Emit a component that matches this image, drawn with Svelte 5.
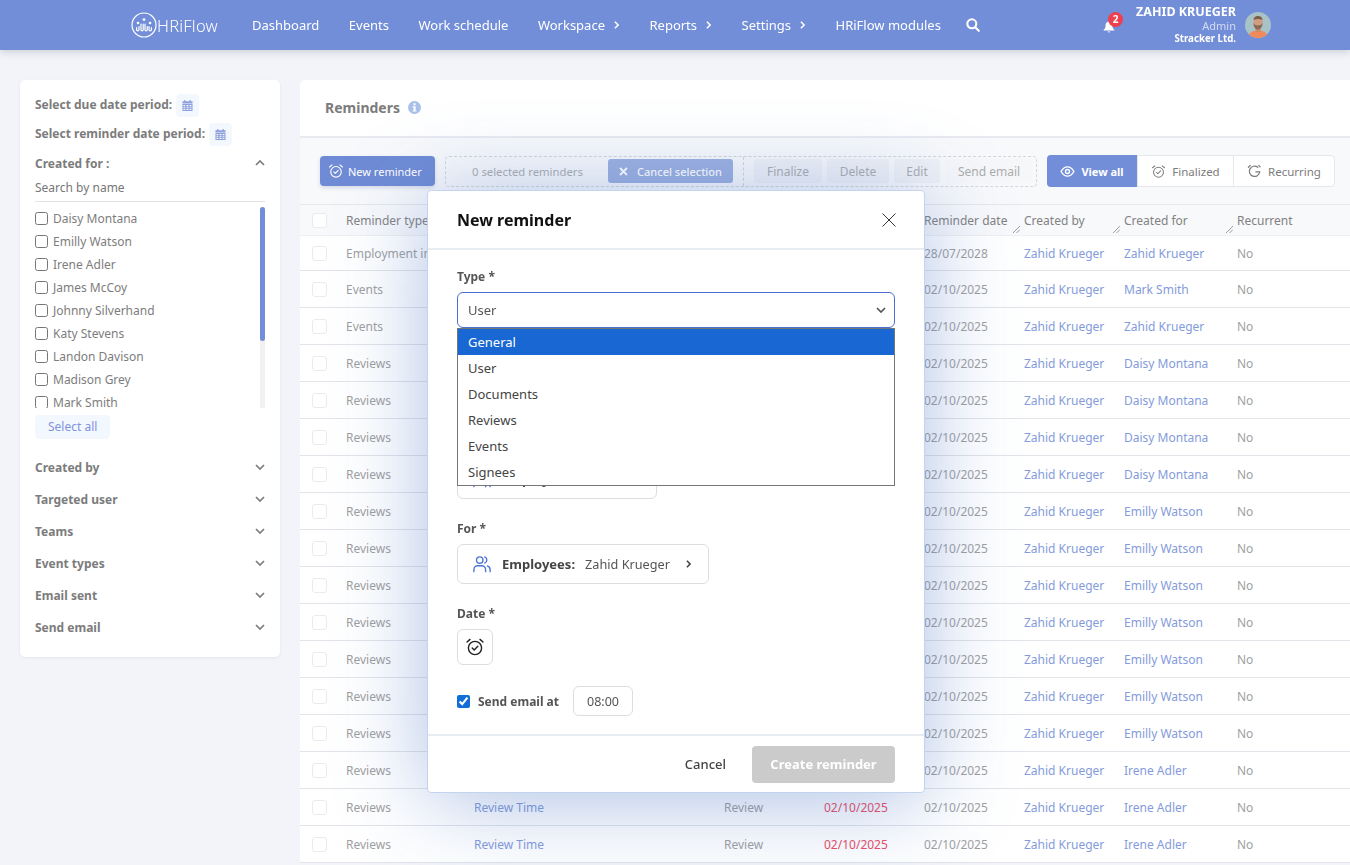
<script lang="ts">
  const navItems = [
    { label: 'Dashboard' },
    { label: 'Events' },
    { label: 'Work schedule' },
    { label: 'Workspace', more: true },
    { label: 'Reports', more: true },
    { label: 'Settings', more: true },
    { label: 'HRiFlow modules' }
  ];

  const people = [
    'Daisy Montana',
    'Emilly Watson',
    'Irene Adler',
    'James McCoy',
    'Johnny Silverhand',
    'Katy Stevens',
    'Landon Davison',
    'Madison Grey',
    'Mark Smith',
    'Zahid Krueger'
  ];

  const filters = ['Created by', 'Targeted user', 'Teams', 'Event types', 'Email sent', 'Send email'];

  const columns = [
    { label: 'Reminder type' },
    { label: 'Title' },
    { label: 'Category' },
    { label: 'Due date' },
    { label: 'Reminder date', grip: true },
    { label: 'Created by', grip: true },
    { label: 'Created for', grip: true },
    { label: 'Recurrent' }
  ];

  const createdFor = [
    'Zahid Krueger', 'Mark Smith', 'Zahid Krueger',
    'Daisy Montana', 'Daisy Montana', 'Daisy Montana', 'Daisy Montana',
    'Emilly Watson', 'Emilly Watson', 'Emilly Watson', 'Emilly Watson',
    'Emilly Watson', 'Emilly Watson', 'Emilly Watson',
    'Irene Adler', 'Irene Adler', 'Irene Adler'
  ];

  const rows = createdFor.map((person, i) => ({
    type: i === 0 ? 'Employment info' : i < 3 ? 'Events' : 'Reviews',
    title: i === 0 ? 'Contract end' : i < 3 ? 'Event' : 'Review Time',
    category: i === 0 ? 'Employment' : i < 3 ? 'Event' : 'Review',
    due: i === 0 ? '28/07/2028' : '02/10/2025',
    reminder: i === 0 ? '28/07/2028' : '02/10/2025',
    person
  }));

  const typeOptions = ['General', 'User', 'Documents', 'Reviews', 'Events', 'Signees'];
</script>

{#snippet chevron(dir)}
  <svg class="chev {dir}" viewBox="0 0 10 6" width="10" height="6" fill="none" stroke="currentColor" stroke-width="1.7">
    <path d="M1 1l4 4 4-4" />
  </svg>
{/snippet}

{#snippet calendar()}
  <span class="cal-btn">
    <svg viewBox="0 0 12 12" width="11" height="11" fill="#8ea0dc">
      <rect x="2.4" y="0" width="1.4" height="2.4" />
      <rect x="8.2" y="0" width="1.4" height="2.4" />
      <path d="M.5 1.4h11v2.4H.5z" />
      <path d="M.5 4.4h11V12H.5zM1.6 5.4v1.4h2V5.4zm3.3 0v1.4h2.2V5.4zm3.4 0v1.4h2V5.4zM1.6 7.8v1.2h2V7.8zm3.3 0v1.2h2.2V7.8zm3.4 0v1.2h2V7.8zm-6.7 2.1V11h2V9.9zm3.3 0V11h2.2V9.9zm3.4 0V11h2V9.9z" fill-rule="evenodd" />
    </svg>
  </span>
{/snippet}

{#snippet alarm(size)}
  <svg viewBox="0 0 20 20" width={size} height={size} fill="none" stroke="currentColor" stroke-width="1.4" stroke-linecap="round" stroke-linejoin="round">
    <circle cx="10" cy="11" r="6.6" />
    <path d="M2 5l3-2.6M18 5l-3-2.6" />
    <path d="M7.2 11l2 2 3.6-3.8" />
  </svg>
{/snippet}

{#snippet users(size)}
  <svg viewBox="0 0 20 20" width={size} height={size} fill="none" stroke="#4a74d2" stroke-width="1.5" stroke-linecap="round">
    <circle cx="7.5" cy="5.6" r="3.6" />
    <path d="M1 18.5v-2.2c0-2.6 2-4.4 4.4-4.4h4.2c2.4 0 4.4 1.8 4.4 4.4v2.2" />
    <path d="M13 2.2a3.6 3.6 0 0 1 0 6.8" />
    <path d="M16 12.2c1.8.6 3 2.1 3 4.1v2.2" />
  </svg>
{/snippet}

<header class="topbar">
  <div class="logo">
    <svg viewBox="0 0 26 26" width="26" height="26" fill="none" stroke="#fff" stroke-width="1.2" stroke-linecap="round">
      <circle cx="13" cy="13" r="12" />
      <path d="M5.6 15.5v2.2c0 1.6 2.4 1.6 2.4 0v-3M10 12v5.7c0 1.6 2.2 1.6 2.2 0V12M14 12v5.7c0 1.6 2.2 1.6 2.2 0v-3M18 14.5v3.2c0 1.6 2.4 1.6 2.4 0v-2.2" />
      <circle cx="7" cy="11" r="1.3" fill="#fff" stroke="none" />
      <circle cx="13" cy="7.6" r="1.4" fill="#fff" stroke="none" />
      <circle cx="19" cy="11" r="1.3" fill="#fff" stroke="none" />
    </svg>
    <span>HRiFlow</span>
  </div>
  <nav class="menu">
    {#each navItems as item}
      <span class="menu-item">
        {item.label}
        {#if item.more}
          <svg viewBox="0 0 6 10" width="5" height="8" fill="none" stroke="currentColor" stroke-width="1.9"><path d="M1 1l4 4-4 4" /></svg>
        {/if}
      </span>
    {/each}
    <svg class="search" viewBox="0 0 14 14" width="14" height="14" fill="none" stroke="#fff" stroke-width="2.1" stroke-linecap="round">
      <circle cx="5.8" cy="5.8" r="4.5" />
      <path d="M9.4 9.4l3.4 3.4" />
    </svg>
  </nav>
  <div class="account">
    <span class="bell">
      <svg viewBox="0 0 14 15" width="12" height="13" fill="#fff">
        <path d="M7 0.8c-.5 0-.9.4-.9.9v.4C4 2.6 3 4.2 3 6.2c0 3-1 3.9-2.2 5.2-.3.3 0 .9.4.9h11.6c.4 0 .7-.6.4-.9C12 10.100 11 9.200 11 6.200c0-2-1-3.600-3.100-4.100v-.4c0-.5-.4-.9-.9-.9z" />
        <path d="M5.300 13.200a1.800 1.800 0 0 0 3.400 0z" />
      </svg>
      <span class="badge">2</span>
    </span>
    <div class="who">
      <strong>ZAHID KRUEGER</strong>
      <span class="role">Admin</span>
      <strong class="company">Stracker Ltd.</strong>
    </div>
    <svg class="avatar" viewBox="0 0 26 26" width="26" height="26">
      <defs><clipPath id="av"><circle cx="13" cy="13" r="13" /></clipPath></defs>
      <g clip-path="url(#av)">
        <rect width="26" height="26" fill="#a9c2c6" />
        <path d="M3 26c0-5 4-7.500 10-7.500s10 2.500 10 7.500z" fill="#f08a5d" />
        <rect x="10.500" y="14" width="5" height="6" fill="#c98d70" />
        <ellipse cx="13" cy="10.500" rx="4.600" ry="6" fill="#d09c82" />
        <path d="M8.500 11c0 4 1.800 6.500 4.500 6.500s4.500-2.500 4.500-6.500c-1 2-2.500 2.400-4.500 2.400S9.500 13 8.500 11z" fill="#8a6a55" />
        <path d="M8.500 8C8.500 5.500 10.500 4 13 4s4.500 1.500 4.500 4C15 6.800 11 6.800 8.500 8z" fill="#7a5c4a" />
      </g>
    </svg>
  </div>
</header>

<div class="page">
  <aside class="filters">
    <div class="period">Select due date period: {@render calendar()}</div>
    <div class="period second">Select reminder date period: {@render calendar()}</div>

    <div class="filter-title open">Created for : {@render chevron('up')}</div>
    <div class="search-name">Search by name</div>
    <div class="people">
      <div class="people-list">
        {#each people as name}
          <label class="person"><input type="checkbox" /> {name}</label>
        {/each}
      </div>
      <div class="track"><div class="thumb"></div></div>
    </div>
    <span class="select-all">Select all</span>

    <div class="filter-group">
      {#each filters as filter}
        <div class="filter-title">{filter} {@render chevron('down')}</div>
      {/each}
    </div>
  </aside>

  <main class="panel">
    <div class="panel-head">
      <h1>Reminders</h1>
      <svg viewBox="0 0 13 13" width="13" height="13">
        <circle cx="6.500" cy="6.500" r="6.500" fill="#a9c0ea" />
        <rect x="5.500" y="2.200" width="2" height="2" fill="#fff" />
        <path d="M4.700 5.200h2.900v4.200h.9v1.200H4.600V9.400h1V6.400h-.9z" fill="#fff" />
      </svg>
    </div>

    <div class="toolbar">
      <button class="btn-new">{@render alarm(16)} New reminder</button>
      <div class="selection">
        <span class="count">0 selected reminders</span>
        <span class="cancel-sel">
          <svg viewBox="0 0 9 9" width="9" height="9" stroke="#fff" stroke-width="1.800"><path d="M1 1l7 7M8 1l-7 7" /></svg>
          Cancel selection
        </span>
        <span class="divider"></span>
        <span class="ghost w-finalize">Finalize</span>
        <span class="ghost w-delete">Delete</span>
        <span class="ghost w-edit">Edit</span>
        <span class="ghost w-send">Send email</span>
      </div>
      <div class="views">
        <span class="view active w-all">
          <svg viewBox="0 0 16 12" width="15" height="11" fill="none" stroke="#fff" stroke-width="1.500">
            <path d="M1 6c1.800-3.200 4.200-5 7-5s5.200 1.800 7 5c-1.800 3.200-4.200 5-7 5S2.800 9.200 1 6z" />
            <circle cx="8" cy="6" r="2.200" />
          </svg>
          View all
        </span>
        <span class="view w-final">{@render alarm(15)} Finalized</span>
        <span class="view w-rec">
          <svg viewBox="0 0 16 16" width="15" height="15" fill="none" stroke="currentColor" stroke-width="1.300" stroke-linecap="round">
            <path d="M13.500 8.500a5.500 5.500 0 1 1-2-5" />
            <path d="M13.500 8.500H9.500M1.500 3.500l2-2M12.500 1.500l1.500 1.500" />
          </svg>
          Recurring
        </span>
      </div>
    </div>

    <div class="table">
      <div class="row head">
        <span class="box"></span>
        {#each columns as col}
          <span class="cell">
            {col.label}
            {#if col.grip}
              <svg class="grip" viewBox="0 0 8 8" width="7" height="7" stroke="#777" stroke-width=".8"><path d="M0 8l8-8M4 8l4-4" /></svg>
            {/if}
          </span>
        {/each}
      </div>
      {#each rows as row}
        <div class="row">
          <span class="box"></span>
          <span class="cell">{row.type}</span>
          <span class="cell link">{row.title}</span>
          <span class="cell">{row.category}</span>
          <span class="cell due">{row.due}</span>
          <span class="cell">{row.reminder}</span>
          <span class="cell link">Zahid Krueger</span>
          <span class="cell link">{row.person}</span>
          <span class="cell">No</span>
        </div>
      {/each}
    </div>
  </main>
</div>

<div class="modal">
  <div class="modal-head">
    <h2>New reminder</h2>
    <svg viewBox="0 0 14 14" width="14" height="14" stroke="#333" stroke-width="1"><path d="M.5.500l13 13M13.500.500l-13 13" /></svg>
  </div>

  <div class="modal-body">
    <div class="field type-field">
      <span class="field-label">Type *</span>
      <div class="select">
        User
        {@render chevron('down')}
      </div>
      <ul class="options">
        {#each typeOptions as option, i}
          <li class:selected={i === 0}>{option}</li>
        {/each}
      </ul>
    </div>

    <div class="field">
      <span class="field-label">Title *</span>
      <div class="select plain"></div>
    </div>

    <div class="field">
      <span class="field-label">User *</span>
      <div class="picker short">
        {@render users(18)}
        <strong>Employee</strong>
      </div>
    </div>

    <div class="field">
      <span class="field-label">For *</span>
      <div class="picker">
        {@render users(18)}
        <strong>Employees:</strong>
        <span>Zahid Krueger</span>
        <svg viewBox="0 0 6 10" width="5" height="8" fill="none" stroke="#444" stroke-width="2"><path d="M1 1l4 4-4 4" /></svg>
      </div>
    </div>

    <div class="field">
      <span class="field-label">Date *</span>
      <div class="date-btn">{@render alarm(20)}</div>
    </div>

    <div class="email-row">
      <input type="checkbox" checked />
      <strong>Send email at</strong>
      <span class="time">08:00</span>
    </div>
  </div>

  <div class="modal-foot">
    <span class="cancel">Cancel</span>
    <span class="create">Create reminder</span>
  </div>
</div>

<style>
  :global(body) {
    margin: 0;
    height: 865px;
    overflow: hidden;
    background: #f3f4f9;
    font-family: 'Noto Sans', sans-serif;
    font-size: 12px;
    color: #8e8e8e;
  }

  .topbar {
    position: relative;
    z-index: 30;
    display: flex;
    align-items: center;
    height: 50px;
    padding-left: 131px;
    background: #738ed8;
    color: #fff;
    box-shadow: 0 2px 8px rgba(60, 70, 100, 0.22);
  }

  .logo {
    display: flex;
    align-items: center;
    gap: 0;
    width: 121px;
    font-size: 16.500px;
    font-weight: 300;
    letter-spacing: 0.2px;
  }

  .menu {
    display: flex;
    align-items: center;
    gap: 29.500px;
    font-size: 13px;
  }

  .menu-item {
    display: flex;
    align-items: center;
    gap: 9px;
    white-space: nowrap;
  }

  .menu-item svg {
    margin-right: 1px;
  }

  .search {
    margin-left: -4px;
  }

  .account {
    display: flex;
    align-items: center;
    margin-left: auto;
    padding-right: 79px;
  }

  .bell {
    position: relative;
    display: flex;
    margin-right: 21px;
    padding-top: 2px;
  }

  .badge {
    position: absolute;
    top: -6px;
    left: 5px;
    width: 15px;
    height: 15px;
    border-radius: 50%;
    background: #ef3f4e;
    font-size: 10px;
    font-weight: 700;
    line-height: 15px;
    text-align: center;
  }

  .who {
    display: flex;
    flex-direction: column;
    align-items: flex-end;
    margin: 0 9px 2px 0;
    line-height: 13px;
    font-size: 12px;
  }

  .who strong:first-child {
    font-size: 12.500px;
    line-height: 15px;
  }

  .role {
    color: #d3dbf3;
    font-size: 11px;
  }

  .company {
    font-size: 9.700px;
  }

  .page {
    display: flex;
    align-items: flex-start;
    gap: 20px;
    padding: 30px 0 0 20px;
  }

  .filters {
    flex: 0 0 230px;
    height: 547px;
    padding: 14px 15px 16px;
    border-radius: 5px;
    background: #fff;
    box-shadow: 0 1px 3px rgba(60, 70, 100, 0.08);
    font-size: 12px;
  }

  .period {
    display: flex;
    align-items: flex-start;
    gap: 4px;
    height: 23px;
    margin-bottom: 6px;
    color: #7c7c7c;
    font-weight: 700;
    line-height: 21px;
  }

  .cal-btn {
    display: flex;
    align-items: center;
    justify-content: center;
    width: 23px;
    height: 23px;
    border-radius: 4px;
    background: #f3f8fe;
  }

  .filter-title {
    display: flex;
    align-items: center;
    justify-content: space-between;
    height: 32px;
    color: #7c7c7c;
    font-weight: 700;
  }

  .filter-title.open {
    height: 20px;
    margin-top: 7px;
  }

  .chev.up {
    transform: rotate(180deg);
  }

  .search-name {
    margin-top: 5px;
    padding: 0 0 3px;
    border-bottom: 1px solid #e3e3e3;
    color: #777;
    line-height: 20px;
  }

  .people {
    display: flex;
    justify-content: space-between;
    height: 201px;
    margin-top: 5px;
    overflow: hidden;
  }

  .person {
    display: flex;
    align-items: center;
    gap: 5px;
    height: 23px;
    color: #7d7d7d;
    white-space: nowrap;
  }

  .person input {
    width: 13px;
    height: 13px;
    margin: 0;
  }

  .track {
    width: 5px;
    background: #f1f1f1;
  }

  .thumb {
    height: 134px;
    border-radius: 3px;
    background: #738ed8;
  }

  .select-all {
    display: inline-block;
    margin-top: 7px;
    padding: 0 13px;
    border-radius: 4px;
    background: #f3f8fe;
    color: #7f93de;
    line-height: 24px;
  }

  .filter-group {
    margin-top: 12px;
  }

  .panel {
    flex: 1;
    min-width: 0;
    border-radius: 5px 0 0 0;
    background: #fff;
  }

  .panel-head {
    display: flex;
    align-items: center;
    gap: 8px;
    height: 54px;
    padding: 0 0 2px 25px;
    border-bottom: 2px solid #e8eaf0;
  }

  h1 {
    margin: 0;
    color: #7c7c7c;
    font-size: 14px;
    font-weight: 700;
  }

  .toolbar {
    display: flex;
    align-items: center;
    gap: 10px;
    height: 67px;
    padding-left: 20px;
    background: #f8f9fb;
    border-bottom: 1px solid #e4e6ea;
    box-sizing: border-box;
  }

  .btn-new {
    display: flex;
    align-items: center;
    gap: 4px;
    width: 115px;
    height: 30px;
    padding: 0 0 0 8px;
    border: 0;
    border-radius: 4px;
    background: #6f8bd5;
    color: #fff;
    font: 11px 'Noto Sans', sans-serif;
    box-shadow: 0 2px 4px rgba(80, 100, 160, 0.2);
  }

  .selection {
    display: flex;
    align-items: center;
    gap: 5px;
    width: 592px;
    height: 31px;
    box-sizing: border-box;
    padding-left: 26px;
    border: 1px dashed #d4d6dc;
    border-radius: 4px;
    font-size: 11px;
  }

  .count {
    width: 131px;
    color: #adadad;
    font-size: 11.300px;
    white-space: nowrap;
  }

  .cancel-sel {
    display: flex;
    align-items: center;
    justify-content: center;
    gap: 9px;
    width: 125px;
    height: 24px;
    border-radius: 3px;
    background: #9db0e0;
    color: #fff;
    font-weight: 500;
  }

  .divider {
    height: 29px;
    margin: 0 5px;
    border-left: 1px dashed #d4d6dc;
  }

  .ghost {
    height: 24px;
    border-radius: 3px;
    background: #f0f2f6;
    color: #adadad;
    line-height: 25px;
    text-align: center;
    font-size: 12px;
  }

  .w-finalize { width: 68px; }
  .w-delete { width: 62px; }
  .w-edit { width: 46px; }
  .w-send { width: 88px; background: #f6f7f9; }

  .views {
    display: flex;
    height: 32px;
    box-sizing: border-box;
    border: 1px solid #e6e7ea;
    border-radius: 4px;
    background: #fff;
    font-size: 11.500px;
    color: #7c7c7c;
  }

  .view {
    display: flex;
    align-items: center;
    justify-content: center;
    gap: 6px;
    box-sizing: border-box;
    border-left: 1px solid #e6e7ea;
  }

  .view.active {
    margin: -1px 0 -1px -1px;
    border: 0;
    border-radius: 4px 0 0 4px;
    background: #738ed8;
    color: #fff;
    font-size: 11px;
    font-weight: 700;
  }

  .w-all { width: 90px; }
  .w-final { width: 96px; }
  .w-rec { width: 101px; }

  .table {
    font-size: 12px;
  }

  .row {
    display: grid;
    grid-template-columns: 46px 128px 250px 100px 100px 100px 100px 113px 1fr;
    align-items: center;
    height: 37px;
    box-sizing: border-box;
    border-bottom: 1px solid #e1e4e9;
    color: #9f9f9f;
  }

  .row.head {
    height: 31px;
    border-bottom: 1px solid #eef0f2;
    background: #f8f9fb;
    color: #828282;
  }

  .row.head + .row {
    height: 35px;
  }

  .box {
    width: 13px;
    height: 13px;
    margin-left: 12px;
    border: 1px solid #e9ebef;
    border-radius: 3px;
    background: #fff;
  }

  .cell {
    position: relative;
    height: 100%;
    display: flex;
    align-items: center;
    white-space: nowrap;
  }

  .grip {
    position: absolute;
    right: 4px;
    bottom: 2px;
  }

  .link {
    color: #849bdb;
  }

  .due {
    color: #ee4b62;
  }

  .modal {
    position: fixed;
    top: 190px;
    left: 427px;
    z-index: 20;
    display: flex;
    flex-direction: column;
    box-sizing: border-box;
    width: 498px;
    height: 603px;
    border: 1px solid #c3d4ee;
    border-radius: 4px;
    background: #fff;
    color: #444;
    box-shadow: 0 8px 90px rgba(70, 115, 195, 0.45);
  }

  .modal-head {
    display: flex;
    align-items: center;
    justify-content: space-between;
    flex: 0 0 57px;
    padding: 0 28px 0 29px;
    border-bottom: 2px solid #e8edf1;
  }

  h2 {
    margin: 0;
    color: #111;
    font-size: 16px;
    font-weight: 700;
  }

  .modal-body {
    flex: 1;
    padding: 17px 29px 0;
    font-size: 13px;
  }

  .field {
    position: relative;
    display: flex;
    flex-direction: column;
    margin-bottom: 20px;
  }

  .field-label {
    margin-bottom: 5px;
    color: #555;
    font-size: 12px;
    font-weight: 700;
    line-height: 20px;
  }

  .select {
    display: flex;
    align-items: center;
    justify-content: space-between;
    height: 36px;
    box-sizing: border-box;
    padding: 0 8px 0 10px;
    border: 1px solid #4a6fcf;
    border-radius: 6px;
    color: #555;
  }

  .select.plain {
    height: 41px;
    border-color: #ddd;
  }

  .options {
    position: absolute;
    top: 61px;
    left: 0;
    right: 0;
    z-index: 2;
    margin: 0;
    padding: 0;
    list-style: none;
    border: 1px solid #767676;
    background: #fff;
    color: #444;
  }

  .options li {
    height: 26px;
    padding-left: 10px;
    line-height: 26px;
  }

  .options li.selected {
    background: #1967d2;
    color: #fff;
  }

  .picker {
    display: flex;
    align-items: center;
    gap: 11px;
    width: 252px;
    height: 40px;
    box-sizing: border-box;
    padding: 0 15px;
    border: 1px solid #ddd;
    border-radius: 6px;
    color: #555;
  }

  .picker.short {
    width: 200px;
  }

  .picker strong {
    color: #444;
    font-size: 13px;
  }

  .picker span {
    margin-left: -1px;
    margin-right: 5px;
    font-size: 12.700px;
    white-space: nowrap;
  }

  .date-btn {
    display: flex;
    align-items: center;
    justify-content: center;
    width: 36px;
    height: 36px;
    box-sizing: border-box;
    border: 1px solid #ddd;
    border-radius: 6px;
    color: #222;
  }

  .email-row {
    display: flex;
    align-items: center;
    height: 30px;
    margin-top: 21px;
    color: #555;
    font-size: 12px;
  }

  .email-row input {
    width: 13px;
    height: 13px;
    margin: 0 8px 0 0;
    accent-color: #0f6fd6;
  }

  .time {
    display: flex;
    align-items: center;
    justify-content: center;
    width: 60px;
    height: 30px;
    box-sizing: border-box;
    margin-left: 14px;
    border: 1px solid #ddd;
    border-radius: 6px;
    font-size: 12.500px;
  }

  .modal-foot {
    display: flex;
    align-items: center;
    justify-content: flex-end;
    gap: 26px;
    flex: 0 0 56px;
    padding: 0 29px 0 0;
    border-top: 2px solid #e8edf1;
    font-size: 13px;
  }

  .cancel {
    color: #444;
    font-weight: 500;
  }

  .create {
    width: 143px;
    height: 37px;
    border-radius: 4px;
    background: #cbcbcb;
    color: #fff;
    font-weight: 700;
    line-height: 37px;
    text-align: center;
  }
</style>
